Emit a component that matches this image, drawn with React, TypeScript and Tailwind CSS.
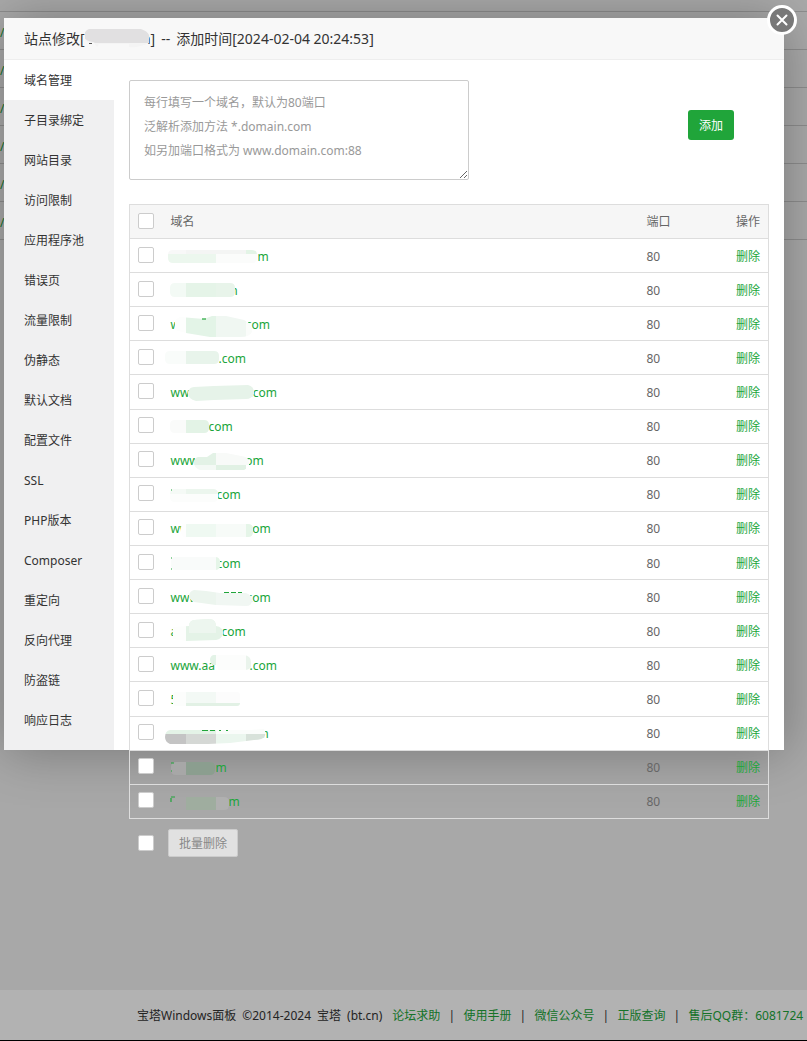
import React from "react";

type Tile = [x: number, y: number, w: number, h: number, fill: string];

interface DomainRow {
  lead: string;
  tail: string;
  tailAt: number;
  outline: string;
  tiles: Tile[];
}

/* Rounded bar outline, in the coordinates of the 120 x 34 mask drawing. */
const bar = (x1: number, y1: number, x2: number, y2: number, r = 5) =>
  `M${x1 + r} ${y1}H${x2 - r}Q${x2} ${y1} ${x2} ${y1 + r}V${y2 - r}Q${x2} ${y2} ${x2 - r} ${y2}H${x1 + r}Q${x1} ${y2} ${x1} ${y2 - r}V${y1 + r}Q${x1} ${y1} ${x1 + r} ${y1}Z`;

const rows: DomainRow[] = [
  {
    lead: "", tail: "m", tailAt: 87, outline: bar(8, 12, 97, 25),
    tiles: [[8, 12, 18, 4, "#f8f8f8"], [26, 12, 60, 4, "#f4f5f4"], [86, 12, 12, 4, "#e3f4e6"], [8, 16, 48, 9, "#ecf7ee"], [56, 16, 42, 9, "#fbfcfb"]],
  },
  {
    lead: "", tail: "m", tailAt: 56, outline: bar(10, 11, 75, 25),
    tiles: [[10, 11, 16, 14, "#f3faf5"], [26, 11, 30, 14, "#e5f4e8"], [56, 11, 20, 14, "#e8f4ea"]],
  },
  {
    lead: "w", tail: ".com", tailAt: 72, outline: "M20 11L44 13L52 10L66 10L84 14Q92 17 92 26Q90 31 80 31L50 31L26 27L15 24V14Z",
    tiles: [[15, 10, 11, 21, "#fdfefd"], [26, 10, 30, 21, "#e3f4e7"], [56, 10, 30, 21, "#f0f7f2"], [86, 10, 8, 21, "#fafcfa"]],
  },
  {
    lead: "", tail: ".com", tailAt: 48, outline: bar(5, 11, 59, 24),
    tiles: [[5, 11, 21, 13, "#f9fcfa"], [26, 11, 34, 13, "#e8f4eb"]],
  },
  {
    lead: "www", tail: ".com", tailAt: 79, outline: "M34 13L54 12L88 11Q94 12 94 19Q92 25 86 25L54 26L36 27Q28 25 28 19Q29 13 34 13Z",
    tiles: [[28, 10, 66, 18, "#e6f3e9"]],
  },
  {
    lead: "", tail: "com", tailAt: 38, outline: bar(10, 11, 49, 24),
    tiles: [[10, 11, 16, 13, "#fafbfa"], [26, 11, 24, 13, "#e3f3e6"]],
  },
  {
    lead: "www.", tail: "com", tailAt: 69, outline: "M38 14L47 14L53 10H66L86 14L89 18V24L84 27H40Q34 25 34 20Q34 15 38 14Z",
    tiles: [[34, 10, 22, 12, "#e3f2e6"], [34, 22, 22, 6, "#f4f9f5"], [56, 10, 34, 12, "#f8faf8"], [56, 22, 30, 6, "#e1f1e4"]],
  },
  {
    lead: "", tail: "com", tailAt: 46, outline: bar(10, 12, 58, 25),
    tiles: [[10, 12, 16, 5, "#f5faf6"], [26, 12, 32, 5, "#ecf6ee"], [10, 17, 48, 8, "#fcfdfc"]],
  },
  {
    lead: "ww", tail: "com", tailAt: 76, outline: bar(21, 13, 93, 26),
    tiles: [[21, 13, 5, 13, "#fefefe"], [26, 13, 30, 13, "#eff9f2"], [56, 13, 30, 13, "#f7fbf8"], [86, 13, 7, 13, "#e5f5e8"]],
  },
  {
    lead: "", tail: "com", tailAt: 46, outline: bar(11, 12, 60, 25),
    tiles: [[11, 12, 45, 13, "#f9fbfa"], [56, 12, 4, 13, "#e5f5e8"]],
  },
  {
    lead: "www", tail: "com", tailAt: 76, outline: "M34 11L46 12L60 14H86Q92 16 92 21Q92 27 86 27L56 26L34 23Q29 20 29 16Q30 12 34 11Z",
    tiles: [[29, 10, 27, 18, "#ecf5ee"], [56, 10, 37, 18, "#f1f7f3"]],
  },
  {
    lead: "a", tail: "com", tailAt: 51, outline: "M13 14L29 13Q29 8 34 7L50 6Q56 7 56 13Q63 14 63 20Q62 26 56 27L26 28L13 26Z",
    tiles: [[13, 6, 13, 22, "#fdfefd"], [26, 6, 37, 22, "#e4f3e7"], [29, 6, 27, 14, "#edf6ef"]],
  },
  {
    lead: "www.aa", tail: ".com", tailAt: 79, outline: "M54 8H84Q91 9 91 15V20Q89 23 85 23H58L57 18H54Q50 17 50 12Q51 8 54 8Z",
    tiles: [[50, 7, 6, 17, "#e3f3e7"], [56, 7, 30, 17, "#fcfdfc"], [86, 7, 6, 17, "#eaf4ec"]],
  },
  {
    lead: "5", tail: "", tailAt: 60, outline: bar(13, 11, 80, 25, 3),
    tiles: [[13, 11, 13, 14, "#fcfdfc"], [26, 11, 30, 11, "#f3f9f5"], [56, 11, 24, 11, "#fcfcfc"], [26, 22, 54, 3, "#e2f1e5"]],
  },
  {
    lead: "", tail: "m", tailAt: 87, outline: "M10 14H90L104 13Q106 15 105 20Q103 24 94 24L70 27L48 28H10Q5 26 5 21Q5 15 10 14Z",
    tiles: [[5, 12, 51, 6, "#e4f3e7"], [56, 12, 50, 6, "#fafcfa"], [5, 18, 21, 10, "#c4c4c4"], [26, 18, 30, 10, "#d5d8d5"], [56, 18, 30, 10, "#ebf6ee"], [86, 18, 20, 10, "#d8e2da"]],
  },
  {
    lead: "", tail: "m", tailAt: 45, outline: bar(11, 12, 55, 25),
    tiles: [[11, 12, 15, 13, "#a7a7a7"], [26, 12, 29, 13, "#8b9e8f"]],
  },
  {
    lead: "", tail: "m", tailAt: 58, outline: bar(11, 13, 69, 26),
    tiles: [[11, 13, 15, 13, "#a7a7a7"], [26, 13, 30, 13, "#9fad9f"], [56, 13, 13, 13, "#b0b0b0"]],
  },
];

/* Small remnants of letters that stick out around a mask. */
const traces: Record<number, string> = {
  2: "M42 13h4",
  7: "M11 13h1",
  9: "M11 13h1M11 24h1",
  10: "M64 13.500h5M71 13.500h5M78 13.500h4",
  14: "M42 14.500h6M50 14.500h5M59 14.500h2M66 14.500h2",
  15: "M11 13h3M11 21h1",
  16: "M11 13h4M11 14v4",
};

const menu = [
  "域名管理", "子目录绑定", "网站目录", "访问限制", "应用程序池", "错误页", "流量限制", "伪静态", "默认文档",
  "配置文件", "SSL", "PHP版本", "Composer", "重定向", "反向代理", "防盗链", "响应日志",
];

const footerLinks = ["论坛求助", "使用手册", "微信公众号", "正版查询", "售后QQ群：6081724"];

const boxClass =
  "block size-4 shrink-0 appearance-none rounded-xs border border-[#ccc] bg-white checked:bg-[#20a53a]";

function DomainMask({ row, index }: { row: DomainRow; index: number }) {
  const id = `mask-${index}`;
  return (
    <svg className="absolute top-0 -left-[11px]" width="120" height="34" viewBox="0 1 120 34" aria-hidden="true">
      <clipPath id={id}>
        <path d={row.outline} />
      </clipPath>
      {index < 15 && <path d={row.outline} fill="#fff" />}
      <g clipPath={`url(#${id})`} shapeRendering="crispEdges">
        {row.tiles.map(([x, y, w, h, fill], i) => (
          <rect key={i} x={x} y={y} width={w} height={h} fill={fill} />
        ))}
      </g>
      {traces[index] && <path d={traces[index]} stroke="#20a53a" strokeWidth="1.200" fill="none" />}
    </svg>
  );
}

function DomainTable() {
  return (
    <table className="mt-6 h-[615px] w-full border-collapse border border-[#ddd] text-left text-[#666]">
      <thead>
        <tr className="h-[34px] border-b border-[#ddd] bg-[#f6f6f6]">
          <th className="w-[41px] pt-0 pb-[2px] pl-2">
            <input type="checkbox" aria-label="全选" className={boxClass} />
          </th>
          <th className="px-0 pt-px pb-0 font-normal">域名</th>
          <th className="w-[66px] px-0 pt-px pb-0 font-normal">端口</th>
          <th className="w-14 pt-px pr-2 pb-0 text-right font-normal">操作</th>
        </tr>
      </thead>
      <tbody>
        {rows.map((row, i) => (
          <tr key={i} className="h-[34px] border-b border-[#ddd]">
            <td className="pt-0 pb-[2px] pl-2">
              <input type="checkbox" aria-label={`选择域名 ${i + 1}`} className={boxClass} />
            </td>
            <td className="p-0">
              <a href="#domain" className="relative flex h-[33px] items-center pt-[2px] text-[#20a53a]">
                <span className="shrink-0" style={{ width: row.tailAt }}>{row.lead}</span>
                <span>{row.tail}</span>
                <DomainMask row={row} index={i} />
              </a>
            </td>
            <td className="px-0 pt-[2px] pb-0">80</td>
            <td className="pt-[2px] pr-2 pb-0 text-right">
              <a href="#delete" className="text-[#20a53a]">删除</a>
            </td>
          </tr>
        ))}
      </tbody>
    </table>
  );
}

function SiteDialog() {
  return (
    <section
      role="dialog"
      aria-label="站点修改"
      className="absolute top-[18px] right-[23px] left-1 flex h-[732px] flex-col bg-white shadow-[1px_1px_50px_rgba(0,0,0,0.3)]"
    >
      <header className="flex h-[42px] shrink-0 items-center border-b border-[#eee] bg-[#f8f8f8] px-5 text-sm text-[#333]">
        <h1 className="flex gap-[6px]">
          <span className="flex">
            <span>站点修改[</span>
            <span className="relative w-[66px] text-right">
              n
              <svg className="absolute top-0 left-0" width="66" height="20" viewBox="0 0 66 20" aria-hidden="true">
                <path d="M4 14.500h3" stroke="#555" strokeWidth="1" />
                <path d="M8 0H50Q64 2 64 9V14Q54 19 44 18V15H14L12 18L9 14Q0 14 0 8Q0 1 8 0Z" fill="#f4f4f4" />
                <path d="M8 -1H52Q62 1 64 6V14H10L8 13Q-1 12 -1 6Q0 0 8 -1Z" fill="#e1e0e1" />
              </svg>
            </span>
            <span>]</span>
          </span>
          <span>--</span>
          <span>添加时间[2024-02-04 20:24:53]</span>
        </h1>
      </header>

      <button
        type="button"
        aria-label="关闭"
        className="absolute -top-[13px] -right-[13px] flex size-[30px] items-center justify-center rounded-full border-3 border-white bg-[#787878]"
      >
        <svg width="12" height="12" viewBox="0 0 12 12" aria-hidden="true">
          <path d="M1.500 1.500L10.500 10.500M10.500 1.500L1.500 10.500" stroke="#fff" strokeWidth="2" strokeLinecap="round" />
        </svg>
      </button>

      <div className="flex min-h-0 flex-1">
        <nav className="w-[110px] shrink-0 bg-[#f0f0f1]">
          {menu.map((label, i) => (
            <a
              key={label}
              href="#section"
              aria-current={i === 0 ? "page" : undefined}
              className="block h-10 pl-5 leading-[42px] text-[#333] aria-[current=page]:bg-white"
            >
              {label}
            </a>
          ))}
        </nav>

        <div className="min-w-0 flex-1 px-[15px] pt-5">
          <div className="flex items-start justify-between">
            <textarea
              aria-label="域名"
              placeholder={"每行填写一个域名，默认为80端口\n泛解析添加方法 *.domain.com\n如另加端口格式为 www.domain.com:88"}
              className="block h-[100px] w-[340px] rounded-xs border border-[#ccc] bg-white px-[14px] py-[10px] leading-6 placeholder:text-[#999]"
            />
            <button type="button" className="mt-[30px] mr-[35px] h-[30px] rounded-[3px] bg-[#20a53a] px-[11px] pt-[2px] text-white">
              添加
            </button>
          </div>

          <DomainTable />

          <div className="mt-[10px] flex items-center gap-[14px] pl-[9px]">
            <input type="checkbox" aria-label="全选域名" className={boxClass} />
            <button type="button" className="h-7 rounded-xs border border-[#ccc] bg-[#e1e1e1] px-[10px] pt-[2px] text-[#888]">
              批量删除
            </button>
          </div>
        </div>
      </div>
    </section>
  );
}

export default function App() {
  return (
    <div className="relative flex min-h-screen flex-col overflow-hidden bg-[#f1f1f1] font-['Noto_Sans','Noto_Sans_CJK_SC',sans-serif] text-xs text-[#333]">
      <div className="h-[300px] bg-[#f4f4f4]">
        <div className="h-3 border-b border-[#ccc]" />
        {[0, 1, 2, 3, 4, 5].map((n) => (
          <div key={n} className="flex h-[38px] items-center border-b border-[#ccc] pt-1">
            <a href="#path" className="text-[#20a53a]">/</a>
          </div>
        ))}
      </div>
      <div className="flex-1" />
      <footer className="flex h-[51px] items-center gap-[10px] border-b border-black bg-white pt-[2px] pl-[137px] whitespace-nowrap">
        <span className="flex gap-[6px]">
          <span>宝塔Windows面板</span>
          <span>©2014-2024</span>
          <span>宝塔</span>
          <span>(bt.cn)</span>
        </span>
        <span className="flex gap-2">
          {footerLinks.map((label, i) => (
            <React.Fragment key={label}>
              {i > 0 && <span className="w-[7px] text-center">|</span>}
              <a href="#help" className="text-[#20a53a]">{label}</a>
            </React.Fragment>
          ))}
        </span>
      </footer>
      <div className="absolute inset-0 bg-black/30" />
      <SiteDialog />
    </div>
  );
}
